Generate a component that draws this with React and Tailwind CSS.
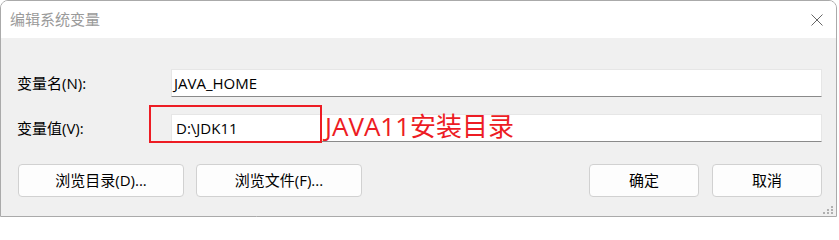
import React from 'react';

const font = { fontFamily: '"Open Sans", "Noto Sans CJK SC", sans-serif' };

const Field = ({ label, value, children }) => (
  <div className="relative flex items-center pl-[16px]">
    <div className="w-[154px] text-[15px] text-black leading-none">{label}</div>
    <div className="w-[651px] h-[28px] bg-white border border-[#e6e6e6] border-b-[#8a8a8a] flex items-center pl-[2px] text-[15px] text-black">
      {value}
    </div>
    {children}
  </div>
);

const Button = ({ children, className = '' }) => (
  <button
    className={`h-[33px] rounded-[4px] border border-[#d1d1d1] bg-[#fdfdfd] text-[15px] text-black flex items-center justify-center ${className}`}
    style={font}
  >
    {children}
  </button>
);

export default function App() {
  return (
    <div className="w-[839px] h-[217px] bg-white" style={font}>
      <div className="w-[837px] h-[217px] border border-[#aaaaaa] rounded-t-[8px] overflow-hidden flex flex-col">
        {/* Title bar */}
        <div className="h-[37px] bg-white flex items-center justify-between pl-[9px] pr-[13px]">
          <span className="text-[15px] text-[#9a9a9a]">编辑系统变量</span>
          <svg width="12" height="12" viewBox="0 0 12 12">
            <path d="M0.5 0.5 L11.5 11.5 M11.5 0.5 L0.5 11.5" stroke="#666" strokeWidth="1" />
          </svg>
        </div>

        {/* Body */}
        <div className="relative flex-1 bg-[#f0f0f0] pt-[31px]">
          <div className="flex flex-col gap-[17px]">
            <Field label="变量名(N):" value="JAVA_HOME" />
            <Field label="变量值(V):" value={<span className="pl-[2px]">D:\JDK11</span>}>
              <div className="absolute left-[148px] top-[-9px] w-[173px] h-[38px] border-2 border-[#ed1c24]" />
              <span className="absolute left-[324px] top-[-5px] text-[26px] leading-[34px] text-[#ed1c24]">
                JAVA11安装目录
              </span>
            </Field>
          </div>

          <div className="flex justify-between pl-[17px] pr-[14px] mt-[22px]">
            <div className="flex gap-[12px]">
              <Button className="w-[166px]">浏览目录(D)...</Button>
              <Button className="w-[166px]">浏览文件(F)...</Button>
            </div>
            <div className="flex gap-[13px]">
              <Button className="w-[110px]">确定</Button>
              <Button className="w-[110px]">取消</Button>
            </div>
          </div>

          {/* Resize grip */}
          <svg className="absolute right-[2px] bottom-[1px]" width="11" height="9" viewBox="0 0 11 9">
            <rect x="8" y="0" width="2" height="2" fill="#b0b0b0" />
            <rect x="4" y="3" width="2" height="2" fill="#b0b0b0" />
            <rect x="8" y="3" width="2" height="2" fill="#b0b0b0" />
            <rect x="0" y="6" width="2" height="2" fill="#b0b0b0" />
            <rect x="4" y="6" width="2" height="2" fill="#b0b0b0" />
            <rect x="8" y="6" width="2" height="2" fill="#b0b0b0" />
          </svg>
        </div>
      </div>
    </div>
  );
}
